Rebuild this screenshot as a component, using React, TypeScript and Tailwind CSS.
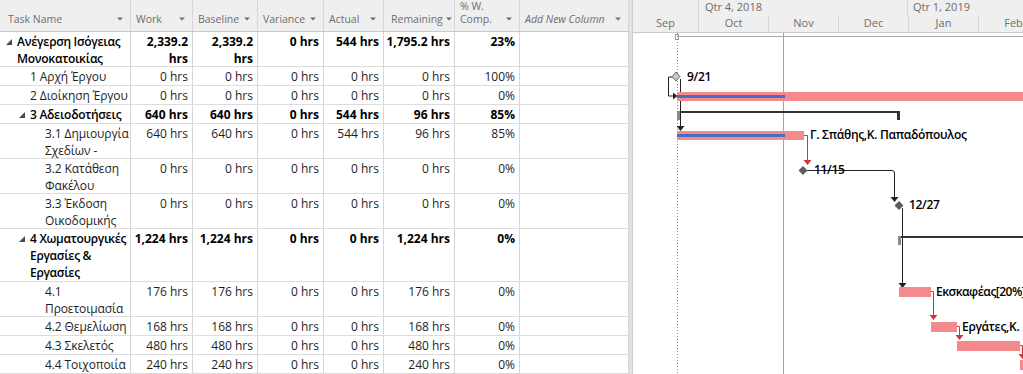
import React from 'react';

type Row = {
  name: string[];
  lvl: number;
  summary?: boolean;
  h: string;
  vals: (string | string[])[];
};

const rows: Row[] = [
  { name: ['Ανέγερση Ισόγειας', 'Μονοκατοικίας'], lvl: 0, summary: true, h: 'h-[35px]', vals: [['2,339.2', 'hrs'], ['2,339.2', 'hrs'], '0 hrs', '544 hrs', '1,795.2 hrs', '23%'] },
  { name: ['1 Αρχή Έργου'], lvl: 1, h: 'h-[19px]', vals: ['0 hrs', '0 hrs', '0 hrs', '0 hrs', '0 hrs', '100%'] },
  { name: ['2 Διοίκηση Έργου'], lvl: 1, h: 'h-[19px]', vals: ['0 hrs', '0 hrs', '0 hrs', '0 hrs', '0 hrs', '0%'] },
  { name: ['3 Αδειοδοτήσεις'], lvl: 1, summary: true, h: 'h-[19px]', vals: ['640 hrs', '640 hrs', '0 hrs', '544 hrs', '96 hrs', '85%'] },
  { name: ['3.1 Δημιουργία', 'Σχεδίων -'], lvl: 2, h: 'h-[35px]', vals: ['640 hrs', '640 hrs', '0 hrs', '544 hrs', '96 hrs', '85%'] },
  { name: ['3.2 Κατάθεση', 'Φακέλου'], lvl: 2, h: 'h-[35px]', vals: ['0 hrs', '0 hrs', '0 hrs', '0 hrs', '0 hrs', '0%'] },
  { name: ['3.3 Έκδοση', 'Οικοδομικής'], lvl: 2, h: 'h-[35px]', vals: ['0 hrs', '0 hrs', '0 hrs', '0 hrs', '0 hrs', '0%'] },
  { name: ['4 Χωματουργικές', 'Εργασίες &', 'Εργασίες'], lvl: 1, summary: true, h: 'h-[53px]', vals: ['1,224 hrs', '1,224 hrs', '0 hrs', '0 hrs', '1,224 hrs', '0%'] },
  { name: ['4.1', 'Προετοιμασία'], lvl: 2, h: 'h-[35px]', vals: ['176 hrs', '176 hrs', '0 hrs', '0 hrs', '176 hrs', '0%'] },
  { name: ['4.2 Θεμελίωση'], lvl: 2, h: 'h-[19px]', vals: ['168 hrs', '168 hrs', '0 hrs', '0 hrs', '168 hrs', '0%'] },
  { name: ['4.3 Σκελετός'], lvl: 2, h: 'h-[19px]', vals: ['480 hrs', '480 hrs', '0 hrs', '0 hrs', '480 hrs', '0%'] },
  { name: ['4.4 Τοιχοποιία'], lvl: 2, h: 'h-[19px]', vals: ['240 hrs', '240 hrs', '0 hrs', '0 hrs', '240 hrs', '0%'] },
];

const cols = 'grid grid-cols-[131px_62px_65px_66px_60px_71px_65px_109px]';
const indent = ['pl-[4px]', 'pl-[17px]', 'pl-[32px]'];

const DropArrow = () => (
  <svg width="6" height="4" viewBox="0 0 6 4" className="shrink-0 mb-[5px]">
    <polygon points="0,0.5 6,0.5 3,3.5" fill="#707070" />
  </svg>
);

const Expander = () => (
  <svg width="6" height="6" viewBox="0 0 6 6" className="mt-[6px] ml-[2px]">
    <polygon points="6,0 6,6 0,6" fill="#4a4a4a" />
  </svg>
);

const headers: { label: string[]; italic?: boolean }[] = [
  { label: ['Task Name'] },
  { label: ['Work'] },
  { label: ['Baseline'] },
  { label: ['Variance'] },
  { label: ['Actual'] },
  { label: ['Remaining'] },
  { label: ['% W.', 'Comp.'] },
  { label: ['Add New Column'], italic: true },
];

const months = ['Sep', 'Oct', 'Nov', 'Dec', 'Jan', 'Feb'];

function Gantt() {
  const pink = '#f48a8b';
  const blue = '#4470c4';
  const red = '#d8313b';
  const txt = { fontFamily: '"Open Sans", sans-serif', fontWeight: 600, fontSize: 12, letterSpacing: '-0.3px' } as const;
  return (
    <svg width="390" height="341" viewBox="633 33 390 341" className="block">
      <line x1="677" y1="36.5" x2="1023" y2="36.5" stroke="#a8a8a8" />
      <rect x="675.5" y="34.5" width="3" height="5" fill="none" stroke="#999" />
      <line x1="677.5" y1="33" x2="677.5" y2="374" stroke="#8a8a8a" strokeDasharray="1 2" />
      <line x1="783.5" y1="33" x2="783.5" y2="374" stroke="#7dbb7d" />

      {/* row 1 milestone */}
      <path d="M674 77 H668.5 V96 H674" fill="none" stroke="#222" />
      <polygon points="673,92.5 677.5,96 673,99.5" fill="#222" />
      <path d="M680.5 79 V127" stroke="#222" />
      <polygon points="676.5,126 684.5,126 680.5,131" fill="#222" />
      <polygon points="676,72 680,76.5 676,81 672,76.5" fill="#c8c8c8" stroke="#666" />
      <text x="687" y="80.5" style={txt}>9/21</text>

      {/* row 2 */}
      <rect x="677" y="92" width="346" height="9" fill={pink} />
      <rect x="677" y="95" width="108" height="3" fill={blue} />

      {/* row 3 summary */}
      <rect x="677" y="111" width="223" height="2" fill="#333" />
      <rect x="677" y="111" width="3" height="9" fill="#888" />
      <rect x="897" y="111" width="3" height="9" fill="#333" />

      {/* row 4 */}
      <rect x="677" y="131" width="127" height="9" fill={pink} />
      <rect x="677" y="134" width="108" height="3" fill={blue} />
      <text x="810" y="138.5" style={txt}>Γ. Σπάθης,Κ. Παπαδόπουλος</text>
      <path d="M804 135.5 H807.5 V161" fill="none" stroke={red} />
      <polygon points="803.5,160 811.5,160 807.5,165" fill={red} />

      {/* row 5 */}
      <path d="M807 170.5 H892 Q894.5 170.5 894.5 173 V198" fill="none" stroke="#222" />
      <polygon points="890.5,197 898.5,197 894.5,202" fill="#222" />
      <polygon points="803,166 807.5,170.5 803,175 798.5,170.5" fill="#5c5c5c" />
      <text x="814" y="174" style={txt}>11/15</text>

      {/* row 6 */}
      <path d="M902.5 208 V283" stroke="#222" />
      <polygon points="898.5,283 906.5,283 902.5,288" fill="#222" />
      <polygon points="899,201 903.5,205.5 899,210 894.5,205.5" fill="#5c5c5c" />
      <text x="909" y="209" style={txt}>12/27</text>

      {/* row 7 summary */}
      <rect x="899" y="236" width="124" height="2" fill="#333" />
      <rect x="898" y="236" width="3" height="9" fill="#888" />

      {/* rows 8-11 */}
      <rect x="899" y="287" width="32" height="10" fill={pink} />
      <text x="936" y="296" style={{ ...txt, letterSpacing: '-0.5px' }}>Εκσκαφέας[20%]</text>
      <path d="M931 291.5 H933.5 V316" fill="none" stroke={red} />
      <polygon points="929.5,315 937.5,315 933.5,320" fill={red} />

      <rect x="931" y="322" width="26" height="10" fill={pink} />
      <text x="962" y="331" style={txt}>Εργάτες,Κ.</text>
      <path d="M957 326.5 H959.5 V336" fill="none" stroke={red} />
      <polygon points="955.5,335 963.5,335 959.5,340" fill={red} />

      <rect x="957" y="341" width="63" height="10" fill={pink} />
      <path d="M1020 345.5 H1022.5 V355" fill="none" stroke={red} />
      <polygon points="1018.5,354 1026.5,354 1022.5,359" fill={red} />
      <rect x="1020" y="360" width="10" height="10" fill={pink} />
    </svg>
  );
}

export default function App() {
  return (
    <div className="w-[1023px] h-[374px] overflow-hidden bg-white flex text-[12px] text-[#1e1e1e] font-['Open_Sans',sans-serif] leading-[17px]">
      {/* table */}
      <div className="w-[629px] shrink-0 flex flex-col">
        <div className={`${cols} h-[33px] bg-[#efefef] border-b border-[#c9c9c9] text-[10.5px] leading-[13px] text-[#6e6e6e]`}>
          {headers.map((hd, i) => (
            <div key={i} className={`flex items-end justify-between gap-[3px] ${i === 0 ? 'pl-[8px]' : i === 5 ? 'pl-[7px]' : 'pl-[5px]'} pr-[7px] pb-[5px] border-r border-[#d6d6d6]`}>
              <div className={hd.italic ? 'italic' : ''}>
                {hd.label.map((l, j) => (
                  <div key={j}>{l}</div>
                ))}
              </div>
              <DropArrow />
            </div>
          ))}
        </div>
        {rows.map((r, i) => (
          <div key={i} className={`${cols} ${r.h} shrink-0 border-b border-[#dcdcdc] ${r.summary ? 'font-bold text-black' : ''}`}>
            <div className={`flex ${indent[r.lvl]} pt-[1px] border-r border-[#d6d6d6] overflow-hidden`}>
              <div className="w-[13px] shrink-0">{r.summary && <Expander />}</div>
              <div className={`whitespace-nowrap ${r.summary ? 'font-semibold tracking-[-0.3px]' : 'tracking-[-0.1px]'}`}>
                {r.name.map((n, j) => (
                  <div key={j}>{n}</div>
                ))}
              </div>
            </div>
            {r.vals.map((v, j) => (
              <div key={j} className="text-right pr-[4px] pt-[1px] border-r border-[#d6d6d6] whitespace-nowrap">
                {Array.isArray(v) ? v.map((x, k) => <div key={k}>{x}</div>) : v}
              </div>
            ))}
            <div className="border-r border-[#d6d6d6]" />
          </div>
        ))}
      </div>

      {/* splitter */}
      <div className="w-[4px] shrink-0 bg-[#e2e2e2] border-r border-[#cfcfcf]" />

      {/* gantt */}
      <div className="flex-1 flex flex-col min-w-0">
        <div className="h-[33px] shrink-0 bg-[#efefef] border-b border-[#c9c9c9] flex flex-col text-[11px] leading-[14px] text-[#6e6e6e]">
          <div className="h-[16px] flex">
            <div className="w-[66px] shrink-0 border-r border-[#d6d6d6]" />
            <div className="w-[209px] shrink-0 border-r border-[#d6d6d6] pl-[6px]">Qtr 4, 2018</div>
            <div className="flex-1 pl-[5px] whitespace-nowrap">Qtr 1, 2019</div>
          </div>
          <div className="flex-1 flex">
            {months.map((m, i) => (
              <div key={m} className={`${i === 0 ? 'w-[66px]' : 'w-[70px]'} shrink-0 text-center border-r border-[#d6d6d6]`}>
                {m}
              </div>
            ))}
          </div>
        </div>
        <Gantt />
      </div>
    </div>
  );
}
